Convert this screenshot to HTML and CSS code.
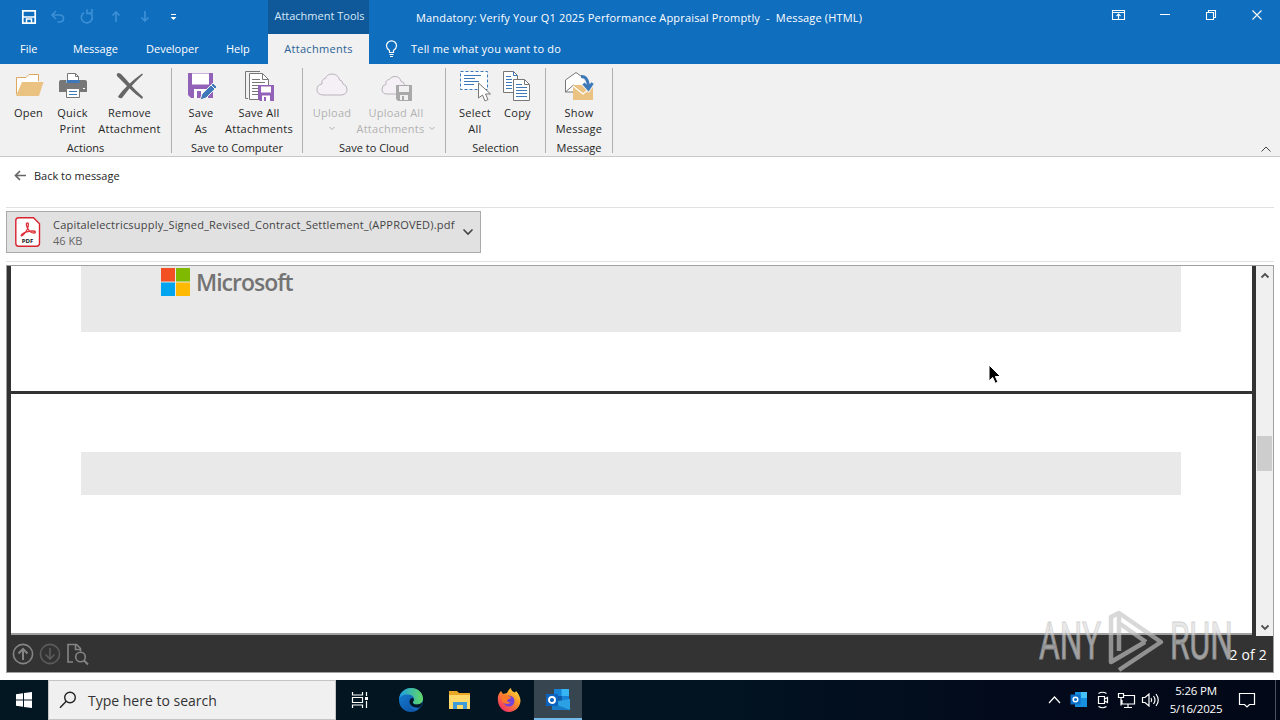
FILE: index.html
```
<!DOCTYPE html>
<html lang="en">
<head>
  <meta charset="UTF-8" />
  <meta name="viewport" content="width=device-width, initial-scale=1.0"/>
  <title>Message (HTML)</title>
  <link rel="stylesheet" href="styles.css">
</head>
<body>
  <header class="titlebar">
    <div class="quick">
      <svg width="190" height="34" fill="none">
        <path d="M22.8 10.8h12.4v12.4H22.8z" stroke="#fff" stroke-width="1.7"/>
        <path d="M23 17h12M26.5 23v-4h5v4" stroke="#fff" stroke-width="1.5"/>
        <g stroke="#3b8fd6" stroke-width="1.7">
          <path d="M56 11l-4 4 4 4M52.500 15h7q4 0 4 3.500t-4 3.500h-2"/>
          <path d="M89 12.300a5.500 5.500 0 1 1-5 .3M87 9.500v4h5V9"/>
          <path d="M116 22V12M112.500 15.500l3.500-3.500 3.500 3.500M145 11v10M141.500 17.500l3.500 3.500 3.500-3.500"/>
        </g>
        <path d="M171 14.500h5" stroke="#fff"/>
        <path d="M170.500 17h6l-3 3z" fill="#fff"/>
      </svg>
    </div>
    <div class="context-title">Attachment Tools</div>
    <div class="window-title">Mandatory: Verify Your Q1 2025 Performance Appraisal Promptly &nbsp;-&nbsp; Message (HTML)</div>
    <svg class="window-buttons" width="180" height="34" fill="none" stroke="#fff" stroke-width="1.100">
      <path d="M12.500 10.500h12v9h-12zM12.500 12.500h12M18.500 19v-5M16.500 16l2-2 2 2M60 14.500h10M106.500 12.500h7v7h-7zM108.500 12v-1.500h7v7H114M152.500 10.500l9 9M161.500 10.500l-9 9"/>
    </svg>
  </header>

  <nav class="tabs">
    <span class="tab file">File</span>
    <span class="tab message">Message</span>
    <span class="tab developer">Developer</span>
    <span class="tab help">Help</span>
    <span class="tab active"><span>Attachments</span></span>
    <svg class="bulb" width="14" height="18" fill="none" stroke="#fff" stroke-width="1.200">
      <path d="M4.500 12.500v-2Q1.500 8.500 1.500 5.800a5 5 0 0 1 10 0q0 2.700-3 4.700v2zM4.500 14.500h4M5 16.500h3"/>
    </svg>
    <span class="tab tell">Tell me what you want to do</span>
  </nav>

  <section class="ribbon">
    <div class="group g-actions">
      <div class="items">
        <div class="item open">
          <svg width="32" height="32">
            <path d="M3.500 24V7.500H13l3-3h9.500V11" fill="#fff" stroke="#dca85e"/>
            <path d="M3 26L9 12h21.500L26 26z" fill="#eac282"/>
          </svg>
          <span>Open</span>
        </div>
        <div class="item print">
          <svg width="32" height="32" fill="none">
            <path d="M10.500 11V3.500h8l3 3V11" fill="#fff" stroke="#777"/>
            <path d="M18.500 3.500v3h3" stroke="#777"/>
            <path d="M4 10h5v3h13v-3h6q2 0 2 2v10H2V12q0-2 2-2z" fill="#777"/>
            <path d="M9.500 10h13v3h-13z" fill="#3d78b8"/>
            <path d="M9.500 18.500h13v9h-13z" fill="#fff" stroke="#777"/>
            <path d="M12 21.500h8M12 24.500h8" stroke="#3d78b8"/>
            <path d="M26 18.500h2" stroke="#fff"/>
          </svg>
          <span>Quick<br>Print</span>
        </div>
        <div class="item remove">
          <svg width="32" height="32" fill="#666">
            <path d="M5 3Q2 3 3 6q7 7 12 12 6 6 13 11l1-2Q21 20 16 14 11 8 7 4z"/>
            <path d="M28 3.500l1 1Q20 13 15 19l-7 9q-3 1-4-1.500Q12 15 28 3.500z"/>
          </svg>
          <span>Remove<br>Attachment</span>
        </div>
      </div>
      <div class="caption">Actions</div>
    </div>

    <div class="group g-computer">
      <div class="items">
        <div class="item save-as">
          <svg width="32" height="32" fill="none">
            <path d="M3 3h25v25H6l-3-3z" fill="#9262b8"/>
            <path d="M7 3.500h17v11H7zM9 19h14v9H9z" fill="#fff"/>
            <path d="M12 21h4v7h-4z" fill="#9262b8"/>
            <path d="M15 30l2-6L28 13l4 4-11 11z" fill="#3d78b8" stroke="#f1f1f1"/>
            <path d="M26 15l4 4" stroke="#fff"/>
          </svg>
          <span>Save<br>As</span>
        </div>
        <div class="item save-all">
          <svg width="32" height="32" fill="none">
            <path d="M5 28.500H2.500v-27H17" stroke="#777"/>
            <path d="M6.500 3.500h13l6 6v20h-19z" fill="#fff" stroke="#777"/>
            <path d="M19.500 3.500v6h6M9 9.500h8M9 12.500h13M9 15.500h6M9 18.500h6M9 21.500h6M9 24.500h6" stroke="#777"/>
            <path d="M15 15h16v16H17l-2-2z" fill="#9262b8"/>
            <path d="M18 16.500h10v6H18zM19 25.500h8V31h-8z" fill="#fff"/>
            <path d="M21 27h2v4h-2z" fill="#9262b8"/>
          </svg>
          <span>Save All<br>Attachments</span>
        </div>
      </div>
      <div class="caption">Save to Computer</div>
    </div>

    <div class="group g-cloud">
      <div class="items">
        <div class="item upload disabled">
          <svg width="32" height="32">
            <path d="M7 25Q1 24.500 1 19.500T6 14q-1-5 3.500-5.500Q11 4 16 4q6 0 7.500 6 3 0 3.500 4 4 1 4 5.500T26 25z" fill="#f5f0f6" stroke="#b9b3bb"/>
          </svg>
          <span>Upload<br><svg class="caret" width="8" height="5"><path d="M1.500 1l2.500 2.500L6.500 1" fill="none" stroke="#b1b1b1"/></svg></span>
        </div>
        <div class="item upload-all disabled">
          <svg width="32" height="32">
            <path d="M7 24q-5 0-5-5 0-4 4-4.500Q5 10 9.500 9.500 11 6 15 6.500q5 0 6 5 3 0 3.500 3.500 3 1 3 4V24z" fill="#f5f0f6" stroke="#b9b3bb"/>
            <path d="M16 15h16v16H18l-2-2z" fill="#a9a9a9"/>
            <path d="M19 16h10v6H19zM20 25h8v5h-8z" fill="#f1f1f1"/>
            <path d="M22 26h2v4h-2z" fill="#a9a9a9"/>
          </svg>
          <span>Upload All<br>Attachments <svg class="caret" width="8" height="5"><path d="M1.500 1l2.500 2.500L6.500 1" fill="none" stroke="#b1b1b1"/></svg></span>
        </div>
      </div>
      <div class="caption">Save to Cloud</div>
    </div>

    <div class="group g-selection">
      <div class="items">
        <div class="item select">
          <svg width="32" height="32" fill="none">
            <path d="M1.500 1.500h27v18h-27z" fill="#fff" stroke="#3d78b8" stroke-dasharray="3 2"/>
            <path d="M5 5.500h17M5 8.500h11M5 11.500h15M5 14.500h10" stroke="#3d78b8"/>
            <path d="M19.500 13v15l4-3 2.500 6 3-1.500-2.500-5.500h5z" fill="#fff" stroke="#777"/>
          </svg>
          <span>Select<br>All</span>
        </div>
        <div class="item copy">
          <svg width="32" height="32" fill="none">
            <path d="M1.500 1.500h10l4 4v17h-14z" fill="#fff" stroke="#777"/>
            <path d="M11.500 1.500v4h4M4 6.500h5M4 9.500h6M4 12.500h6M4 15.500h6M4 18.500h6" stroke="#3d78b8"/>
            <path d="M11.500 9.500h11l5 5v16h-16z" fill="#fff" stroke="#777"/>
            <path d="M22.500 9.500v5h5" stroke="#777"/>
            <path d="M14 14.500h6M14 17.500h11M14 20.500h11M14 23.500h11M14 26.500h11" stroke="#3d78b8"/>
          </svg>
          <span>Copy</span>
        </div>
      </div>
      <div class="caption">Selection</div>
    </div>

    <div class="group g-message">
      <div class="items">
        <div class="item show">
          <svg width="32" height="32" fill="none">
            <path d="M2.500 22V10L13 2.500 23.500 10v12zM2.500 22l8-7" fill="#fff" stroke="#777"/>
            <path d="M10 15h20v15H10z" fill="#eac282"/>
            <path d="M10 16l10 8 10-8" stroke="#fff" stroke-width="1.200"/>
            <path d="M18 6.500q7-.5 7.500 11M20.500 13.500l5 5.500 4-6" stroke="#f1f1f1" stroke-width="5"/>
            <path d="M18 6.500q7-.5 7.500 11M20.500 13.500l5 5.500 4-6" stroke="#3d78b8" stroke-width="3"/>
          </svg>
          <span>Show<br>Message</span>
        </div>
      </div>
      <div class="caption">Message</div>
    </div>
    <svg class="collapse" width="12" height="8"><path d="M1.500 6.500L6 2l4.500 4.500" fill="none" stroke="#444"/></svg>
  </section>

  <main class="content">
    <div class="back">
      <svg width="12" height="12" fill="none" stroke="#666" stroke-width="1.700"><path d="M1.500 5.500H12M6 1L1.500 5.500 6 10"/></svg>
      <span>Back to message</span>
    </div>

    <div class="attachments">
      <div class="attachment">
        <svg width="26" height="30" fill="none">
          <path d="M3.500.8h15l6 6v19.500q0 3-3 3h-18q-2.700 0-2.700-3V3.500Q.8.8 3.500.8z" fill="#fff" stroke="#d8232f" stroke-width="1.400"/>
          <path d="M12.500 6c-2 0-1 3.500.5 6 1.500 2.500 4 4 6 4s2-2-1-2c-4 0-9 1.500-11 3.200s0 2.500 1.500.3C11 15 13 11 13.300 8.500c.2-1.500 0-2.500-.8-2.500z" stroke="#e0303a" stroke-width="1.300"/>
          <text x="12.500" y="26" class="pdf">PDF</text>
        </svg>
        <div class="file-info">
          <div class="file-name">Capitalelectricsupply_Signed_Revised_Contract_Settlement_(APPROVED).pdf</div>
          <div class="file-size">46 KB</div>
        </div>
        <svg class="more" width="12" height="8"><path d="M1.500 1.500L6 6l4.500-4.500" fill="none" stroke="#444" stroke-width="1.600"/></svg>
      </div>
    </div>

    <div class="viewer">
      <div class="document">
        <div class="pages">
          <div class="page first">
            <div class="band logo">
              <svg width="29" height="28" viewBox="0 0 29 29" preserveAspectRatio="none">
                <path d="M0 0h14v14H0z" fill="#f25022"/>
                <path d="M15 0h14v14H15z" fill="#7fba00"/>
                <path d="M0 15h14v14H0z" fill="#00a4ef"/>
                <path d="M15 15h14v14H15z" fill="#ffb900"/>
              </svg>
              <span>Microsoft</span>
            </div>
          </div>
          <div class="page second">
            <div class="band"></div>
          </div>
        </div>
        <div class="scrollbar">
          <svg width="10" height="7"><path d="M1.500 5.500L5 2l3.500 3.500" fill="none" stroke="#505050" stroke-width="1.800"/></svg>
          <div class="thumb"></div>
          <svg width="10" height="7"><path d="M1.500 1.500L5 5l3.500-3.500" fill="none" stroke="#505050" stroke-width="1.800"/></svg>
        </div>
      </div>
      <div class="pager">
        <svg width="84" height="26" fill="none" stroke="#858585" stroke-width="1.600">
          <circle cx="13" cy="13" r="9.600"/>
          <path d="M13 19V8M8.500 12.500L13 8l4.500 4.500" stroke-width="2"/>
          <g stroke="#5c5c5c">
            <circle cx="40" cy="13" r="9.600"/>
            <path d="M40 7v11M35.500 13.500L40 18l4.500-4.500"/>
          </g>
          <path d="M63 21h-5V3.500h8.500l4 4v3M65.500 3.500v5h5"/>
          <circle cx="70.500" cy="16" r="4.800"/>
          <path d="M74 19.500l4 4" stroke-width="2"/>
        </svg>
        <span>2 of 2</span>
      </div>
    </div>
  </main>

  <footer class="taskbar">
    <div class="start">
      <svg width="16" height="16" fill="#fff"><path d="M0 2.300L7 1.300v6.200H0zM8 1.100L16 0v7.500H8zM0 8.500h7v6.200l-7-1zM8 8.500h8V16l-8-1.100z"/></svg>
    </div>
    <div class="search">
      <svg width="18" height="18" fill="none" stroke="#222" stroke-width="1.400"><circle cx="11" cy="6.500" r="5.300"/><path d="M7.200 10.300L1 16.800"/></svg>
      <span>Type here to search</span>
    </div>
    <div class="app">
      <svg width="18" height="18" fill="none" stroke="#fff" stroke-width="1.200"><path d="M1.500 1v3h10V1M1.500 17v-3h10v3M1.500 6.500h10v5h-10zM15.500 1v4M15.500 10v7"/><path d="M14 6h3v3h-3z" fill="#fff" stroke="none"/></svg>
    </div>
    <div class="app edge">
      <svg width="24" height="24">
        <defs>
          <linearGradient id="edge-top" x1="0" x2="1"><stop offset="0" stop-color="#1b9de2"/><stop offset="1" stop-color="#63da65"/></linearGradient>
          <linearGradient id="edge-low" x1="0" x2="1" y2="1"><stop offset="0" stop-color="#1580d5"/><stop offset="1" stop-color="#0c4a9b"/></linearGradient>
        </defs>
        <circle cx="12" cy="12" r="12" fill="url(#edge-low)"/>
        <path d="M0 11C1 4 6 0 12 0c7 0 12 5 12 10.500 0 4-3 6-6 6-4 0-5-2-3.500-3.500C17 10 13 6.500 9 6.500 4 6.500 1 8.500 0 11z" fill="url(#edge-top)"/>
        <path d="M14.500 13c-1.500 1.500-.5 3.500 3.500 3.500 2.500 0 4.500-1 5.500-2.500-.5 2-1.500 4-3 5.500-5 1-10-1.500-10-5.500 0-2 1-3.500 2.500-4 1.500 0 2.500 1.500 1.500 3z" fill="#021522"/>
        <path d="M20.500 19.500c-5 1-10-1.500-10-5.500-1 5 3 8.500 7 8.300z" fill="#1767bd"/>
      </svg>
    </div>
    <div class="app folder">
      <svg width="22" height="20"><path d="M0 1h8l2 2h11v16H0z" fill="#e9a825"/><path d="M0 5h21v14H0z" fill="#ffda6b"/><path d="M4 19v-7h14v7h-4v-4H8v4z" fill="#3f9bd8"/></svg>
    </div>
    <div class="app">
      <svg width="24" height="24">
        <defs><linearGradient id="fox" x1="1" x2=".2" y2="1"><stop offset="0" stop-color="#fff04a"/><stop offset=".45" stop-color="#ff9426"/><stop offset="1" stop-color="#f0286b"/></linearGradient></defs>
        <path d="M1 13Q0 7 4 3l2 3 4-1q1-3 4-5 0 3 4 4.500l1-1.500q4 4 4.500 9.500C23.500 19 18 24 12 24S1.500 19 1 13z" fill="url(#fox)"/>
        <circle cx="12" cy="13" r="5.500" fill="#7542d8"/>
        <path d="M5 8q4-2 6 0 3 0 3 2l-4 2q0 3 4 2-4 4-8 0-2-3-1-6z" fill="#ff7a28"/>
      </svg>
    </div>
    <div class="app current">
      <svg width="26" height="24">
        <path d="M9 1h15v15H9z" fill="#1683d9"/><path d="M16.500 1H24v7h-7.500z" fill="#35b5f1"/><path d="M9 8h8v8H9z" fill="#0f5da8"/>
        <path d="M7 14l18-3v11H7z" fill="#2ba0e3"/><path d="M7 15l18 7H7z" fill="#167bc8"/>
        <path d="M1 6h12v12H1z" fill="#0b63bd"/><circle cx="7" cy="12" r="3" fill="none" stroke="#fff" stroke-width="1.900"/>
      </svg>
    </div>
    <div class="tray">
      <svg width="116" height="24" fill="none" stroke="#fff" stroke-width="1.200">
        <path d="M2 15l5.500-6L13 15"/>
        <g stroke="none"><path d="M28 4h12v15H28z" fill="#168fde"/><path d="M34 4h6v6h-6z" fill="#45c1f5"/><path d="M23.500 6.500h10v10h-10z" fill="#0b6fc8"/></g>
        <circle cx="28.500" cy="11.500" r="2.300" stroke-width="1.500"/>
        <path d="M51.500 8.500h6v7h-6zM57.500 11l3-1.500v5l-3-1.500M51.500 5.500q4-2.500 8 0M51.500 18.500q4 2.500 8 0"/>
        <path d="M76 7.500h11.500v8.500H75v-4M81 16v3M77 19.500h8M71.500 5.500h5v4h-5zM74 9.500v8"/>
        <path d="M95.500 9.500H98l4-3.500v12l-4-3.500h-2.500zM104 10q1.500 2 0 4M106.500 8q3 4 0 8M109 6q4.500 6 0 12"/>
      </svg>
      <div class="clock">5:26 PM<br>5/16/2025</div>
      <svg class="notice" width="18" height="18" fill="none" stroke="#fff" stroke-width="1.200"><path d="M1.500 2.500h15v11h-5l-2.500 2.500-2.500-2.500h-5z"/></svg>
      <div class="desktop"></div>
    </div>
  </footer>

  <svg class="pointer" width="14" height="21"><path d="M1 1v16l3.700-3.500 2.600 5.800 2.600-1.200-2.500-5.600h5.100z" fill="#000" stroke="#fff"/></svg>

  <svg class="watermark" width="204" height="72">
    <g class="wm-text">
      <text x="3" y="52" textLength="62" lengthAdjust="spacingAndGlyphs">ANY</text>
      <text x="134" y="52" textLength="63" lengthAdjust="spacingAndGlyphs">RUN</text>
    </g>
    <path class="wm-logo" d="M83 44V6l42 29-42 28M83 6l-8 4v45l34-20M83 16l27 19"/>
  </svg>
</body>
</html>
```

FILE: styles.css
```
* {
  box-sizing: border-box;
}
body {
  margin: 0;
  width: 1280px;
  height: 720px;
  overflow: hidden;
  position: relative;
  display: flex;
  flex-direction: column;
  font-family: "Open Sans", "Noto Sans", sans-serif;
  font-size: 11px;
  color: #262626;
  background: #fff;
}
svg {
  display: block;
  flex: none;
}
.titlebar {
  display: flex;
  height: 34px;
  background: #106ebe;
  color: #fff;
  line-height: 35px;
  white-space: nowrap;
}
.quick {
  width: 268px;
}
.context-title {
  width: 101px;
  padding-left: 2px;
  text-align: center;
  line-height: 32px;
  background: #0f5899;
  color: #d5e9f8;
}
.window-title {
  flex: 1;
  padding-left: 47px;
  letter-spacing: .17px;
}
.tabs {
  display: flex;
  height: 30px;
  line-height: 30px;
  background: #106ebe;
  color: #fff;
  white-space: nowrap;
}
.file {
  width: 73px;
  padding-left: 20px;
}
.message {
  width: 73px;
}
.developer {
  width: 80px;
}
.help {
  width: 42px;
}
.active {
  width: 101px;
  text-align: center;
  background: #f1f1f1;
  color: #2b6297;
  letter-spacing: .3px;
}
.bulb {
  margin: 6px 6px 0 16px;
}
.tell {
  margin-left: 6px;
  letter-spacing: .2px;
}
.ribbon {
  display: flex;
  height: 93px;
  padding-top: 4px;
  background: #f1f1f1;
  border-bottom: 1px solid #c8c8c8;
}
.group {
  height: 85px;
  border-right: 1px solid #b0b0b0;
  text-align: center;
  white-space: nowrap;
}
.items {
  display: flex;
  justify-content: center;
  height: 73px;
  padding-top: 2px;
}
.item {
  display: flex;
  flex-direction: column;
  align-items: center;
  gap: 3px;
  line-height: 16px;
  letter-spacing: .25px;
}
.caption {
  line-height: 14px;
}
.disabled {
  color: #b1b1b1;
}
.caret {
  display: inline-block;
  vertical-align: 2px;
}
.g-actions { width: 172px; }
.g-computer { width: 131px; }
.g-cloud { width: 143px; }
.g-selection { width: 100px; }
.g-message { width: 67px; }
.open { width: 44px; }
.print { width: 44px; }
.remove { width: 70px; }
.save-as { width: 44px; }
.save-all { width: 72px; }
.upload { width: 44px; }
.upload-all { width: 84px; }
.select { width: 44px; }
.copy { width: 41px; }
.collapse {
  margin: 77px 8px 0 auto;
}
.content {
  height: 523px;
  padding: 0 6px;
}
.back {
  display: flex;
  align-items: center;
  gap: 8px;
  height: 51px;
  padding: 0 0 13px 8px;
  border-bottom: 1px solid #e1e1e1;
}
.attachments {
  height: 54px;
  padding-top: 3px;
  border-bottom: 1px solid #e1e1e1;
}
.attachment {
  display: flex;
  align-items: center;
  width: 475px;
  height: 42px;
  padding: 0 6px 0 8px;
  background: #e1e1e1;
  border: 1px solid #aaa;
}
.pdf {
  font-size: 6px;
  font-weight: bold;
  text-anchor: middle;
  fill: #111;
}
.file-info {
  flex: 1;
  padding: 2px 0 0 12px;
  line-height: 16px;
  white-space: nowrap;
  color: #444;
}
.file-name {
  letter-spacing: .21px;
}
.file-size {
  color: #666;
}
.viewer {
  height: 408px;
  margin-top: 3px;
  width: 1268px;
  border: 1px solid #a0a0a0;
  background: #333;
}
.document {
  display: flex;
  height: 370px;
}
.pages {
  width: 1245px;
  margin-right: 4px;
  padding-left: 4px;
}
.page {
  padding-left: 70px;
  background: #fff;
}
.first {
  height: 125px;
  margin-bottom: 3px;
}
.second {
  height: 241px;
  padding-top: 58px;
  border-bottom: 2px solid #a0a0a0;
}
.band {
  width: 1100px;
  height: 43px;
  background: #e9e9e9;
}
.logo {
  display: flex;
  height: 66px;
  padding: 2px 0 0 80px;
  gap: 6px;
  font-size: 23px;
  font-weight: 600;
  line-height: 28px;
  letter-spacing: -1px;
  color: #737373;
}
.scrollbar {
  display: flex;
  flex-direction: column;
  align-items: center;
  width: 17px;
  padding: 6px 0 5px;
  background: #f0f0f0;
}
.thumb {
  width: 15px;
  height: 35px;
  margin: 157px 0 auto;
  background: #cdcdcd;
}
.pager {
  display: flex;
  align-items: center;
  justify-content: space-between;
  height: 36px;
  padding: 0 6px 0 3px;
  font-size: 14px;
  letter-spacing: .2px;
  color: #fff;
}
.taskbar {
  display: flex;
  height: 40px;
  background: linear-gradient(90deg, #021722, #021421 55%, #030a1b 80%, #020817);
  color: #fff;
}
.start,
.app {
  display: flex;
  align-items: center;
  justify-content: center;
  width: 48px;
}
.app {
  margin-right: 1.500px;
}
.edge,
.folder {
  padding-left: 2px;
}
.search {
  display: flex;
  align-items: center;
  gap: 11px;
  width: 288px;
  padding-left: 10px;
  background: #f0f0f0;
  border: 1px solid #c4c4c4;
  font-size: 14px;
  color: #333;
}
.current {
  padding-top: 2px;
  background: #36454f;
  border-bottom: 2px solid #76b9ed;
}
.tray {
  display: flex;
  align-items: center;
  margin-left: auto;
}
.clock {
  width: 66px;
  text-align: center;
  line-height: 18px;
  font-size: 11.500px;
  letter-spacing: -.2px;
}
.notice {
  margin: 0 19px 0 9px;
}
.desktop {
  width: 5px;
  height: 40px;
  border-left: 1px solid #4a505c;
}
.pointer {
  position: absolute;
  left: 988px;
  top: 364px;
}
.watermark {
  position: absolute;
  left: 1036px;
  top: 607px;
  opacity: .65;
  overflow: visible;
}
.wm-text {
  font-family: Roboto, sans-serif;
  font-size: 51px;
  fill: #ddd;
  stroke: #bbb;
  stroke-width: 1;
}
.wm-logo {
  fill: none;
  stroke: #c4c4c4;
  stroke-width: 4.500;
  stroke-linejoin: round;
}
```
